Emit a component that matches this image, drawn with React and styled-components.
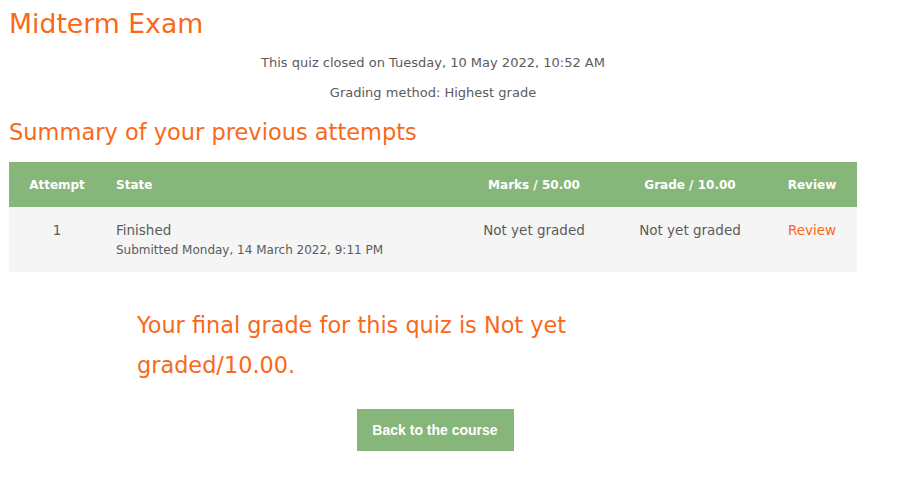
import React from 'react';
import styled, { createGlobalStyle } from 'styled-components';

const Orange = '#f8691a';
const Green = '#87b67b';
const Grey = '#5b5b5b';

const GlobalStyle = createGlobalStyle`
body {
  margin: 0;
  background: #fff;
  font-family: "DejaVu Sans", "Liberation Sans", sans-serif;
  color: ${Grey};
}
`;

const Page = styled.div`
width: 848px;
padding: 0 0 0 9px;
`;
const PageTitle = styled.h2`
margin: 0;
padding-top: 7px;
font-size: 26.7px;
font-weight: 400;
line-height: 34px;
color: ${Orange};
`;
const InfoLine = styled.p`
margin: ${props => (props.first ? '13px' : '12px')} 0 0;
text-align: center;
font-size: 13px;
line-height: 18px;
`;
const SectionTitle = styled.h3`
margin: 16px 0 0;
font-size: 22.5px;
font-weight: 400;
line-height: 28px;
color: ${Orange};
`;
const Table = styled.table`
margin-top: 16px;
width: 848px;
border-collapse: collapse;
font-size: 13.5px;
`;
const HeadCell = styled.th`
background: ${Green};
color: #fff;
height: 45px;
padding: 0;
font-weight: 700;
font-size: 12px;
text-align: ${props => props.align || 'center'};
width: ${props => props.width};
padding-left: ${props => props.padLeft || 0};
`;
const Cell = styled.td`
background: #f5f5f5;
height: 51px;
padding: 14px 0 0;
vertical-align: top;
line-height: 18px;
text-align: ${props => props.align || 'center'};
padding-left: ${props => props.padLeft || 0};
`;
const SubLine = styled.div`
margin-top: 2px;
font-size: 12px;
`;
const ReviewLink = styled.a`
color: ${Orange};
text-decoration: none;
`;
const FinalGrade = styled.h3`
margin: 33px 0 0 128px;
width: 470px;
font-size: 22.4px;
font-weight: 400;
line-height: 40px;
color: ${Orange};
`;
const ButtonRow = styled.div`
display: flex;
justify-content: center;
margin-top: 24px;
`;
const Button = styled.button`
background: ${Green};
color: #fff;
border: none;
width: 157px;
height: 42px;
margin-left: 4px;
font-family: "Liberation Sans", Arial, sans-serif;
font-size: 14px;
font-weight: 700;
`;

const App = () => (
  <Page>
    <GlobalStyle />
    <PageTitle>Midterm Exam</PageTitle>
    <InfoLine first>This quiz closed on Tuesday, 10 May 2022, 10:52 AM</InfoLine>
    <InfoLine>Grading method: Highest grade</InfoLine>
    <SectionTitle>Summary of your previous attempts</SectionTitle>
    <Table>
      <thead>
        <tr>
          <HeadCell width="96px">Attempt</HeadCell>
          <HeadCell align="left" padLeft="11px">State</HeadCell>
          <HeadCell width="158px">Marks / 50.00</HeadCell>
          <HeadCell width="154px">Grade / 10.00</HeadCell>
          <HeadCell width="90px">Review</HeadCell>
        </tr>
      </thead>
      <tbody>
        <tr>
          <Cell>1</Cell>
          <Cell align="left" padLeft="11px">
            Finished
            <SubLine>Submitted Monday, 14 March 2022, 9:11 PM</SubLine>
          </Cell>
          <Cell>Not yet graded</Cell>
          <Cell>Not yet graded</Cell>
          <Cell><ReviewLink href="#">Review</ReviewLink></Cell>
        </tr>
      </tbody>
    </Table>
    <FinalGrade>Your final grade for this quiz is Not yet graded/10.00.</FinalGrade>
    <ButtonRow>
      <Button>Back to the course</Button>
    </ButtonRow>
  </Page>
);

export default App;
